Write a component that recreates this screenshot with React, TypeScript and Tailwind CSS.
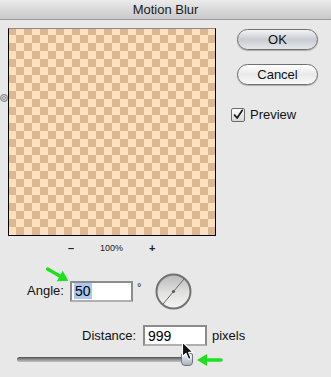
import React from "react";

const font = "font-['Lucida_Grande','Liberation_Sans',Arial,sans-serif]";

function AquaButton({ label, isDefault }: { label: string; isDefault?: boolean }) {
  return (
    <button
      className={`w-[81px] h-[21px] rounded-full border border-[#6f6f6f] text-[13px] leading-none text-[#111] shadow-[0_1px_1px_rgba(0,0,0,0.25)] ${
        isDefault
          ? "bg-linear-to-b from-[#f4f5f7] via-[#c9ccd1] to-[#e4e6ea]"
          : "bg-linear-to-b from-[#ffffff] via-[#e9e9e9] to-[#fafafa]"
      }`}
    >
      {label}
    </button>
  );
}

function GreenArrow({ className, rotate }: { className: string; rotate: number }) {
  return (
    <svg className={className} width="28" height="14" viewBox="0 0 28 14" style={{ transform: `rotate(${rotate}deg)` }}>
      <path d="M2 7 H18" stroke="#1fe01f" strokeWidth="3.5" strokeLinecap="round" />
      <path d="M16 1 L26 7 L16 13 Z" fill="#1fe01f" />
    </svg>
  );
}

export default function App() {
  return (
    <div className={`relative w-[331px] h-[377px] bg-[#e8e8e8] overflow-hidden ${font}`}>
      {/* title bar */}
      <div className="h-[20px] flex items-center justify-center bg-linear-to-b from-[#ebebeb] to-[#c8c8c8] border-b border-[#9c9c9c] text-[13px] text-[#1c1c1c]">
        Motion Blur
      </div>

      <div className="flex pt-[8px]">
        <div className="w-[8px] pt-[66px]">
          <svg width="8" height="8" viewBox="0 0 8 8">
            <circle cx="4" cy="4" r="3.3" fill="none" stroke="#8a8a8a" strokeWidth="1.2" />
            <circle cx="4" cy="4" r="1.5" fill="none" stroke="#8a8a8a" strokeWidth="1" />
          </svg>
        </div>
        <div className="w-[208px] h-[208px] border border-black border-t-[#8a8a8a] bg-[conic-gradient(#fedfbe_25%,#dcb892_0_50%,#fedfbe_0_75%,#dcb892_0)] bg-[length:16px_16px] bg-[position:-1px_-2px]" />
        <div className="ml-[21px] pt-[1px] flex flex-col">
          <AquaButton label="OK" isDefault />
          <div className="mt-[12px]">
            <AquaButton label="Cancel" />
          </div>
          <div className="mt-[19px] flex items-center gap-[5px] -ml-[6px]">
            <div className="w-[14px] h-[14px] rounded-[2px] border border-[#6b6b6b] bg-linear-to-b from-white to-[#d6d6d6] flex items-center justify-center">
              <svg width="14" height="14" viewBox="0 0 14 14">
                <path d="M3 7.2 L6 10.5 L12 1.5" fill="none" stroke="#1a1a1a" strokeWidth="2" strokeLinecap="round" strokeLinejoin="round" />
              </svg>
            </div>
            <span className="text-[13px] text-[#111]">Preview</span>
          </div>
        </div>
      </div>

      {/* zoom controls */}
      <div className="flex items-center h-[12px] mt-[6px] pl-[68px] text-[#222]">
        <span className="w-[8px] text-[11px] font-bold leading-none">–</span>
        <span className="ml-[24px] text-[9px] leading-none">100%</span>
        <span className="ml-[26px] text-[11px] font-bold leading-none">+</span>
      </div>

      {/* angle */}
      <div className="flex items-center h-[36px] mt-[19px] pl-[27px] text-[13px] text-[#111]">
        <span className="w-[40px]">Angle:</span>
        <div className="ml-[3px] w-[63px] h-[21px] border-2 border-[#8c8c8c] border-b-[#b0b0b0] bg-white flex items-center pl-[2px]">
          <span className="bg-[#a9c9f2] px-[1px] text-[14px] leading-[16px] text-black">50</span>
        </div>
        <span className="ml-[4px] -mt-[8px] text-[11px]">°</span>
        <svg className="ml-[14px]" width="37" height="37" viewBox="0 0 37 37">
          <defs>
            <linearGradient id="dial" x1="0" y1="0" x2="0" y2="1">
              <stop offset="0" stopColor="#b9b9b9" />
              <stop offset="0.55" stopColor="#e2e2e2" />
              <stop offset="1" stopColor="#f4f4f2" />
            </linearGradient>
          </defs>
          <circle cx="18.5" cy="18.5" r="17" fill="url(#dial)" stroke="#727272" strokeWidth="2" />
          <path d="M8 31 L29 6" stroke="#5a5a5a" strokeWidth="0.9" />
          <circle cx="18.5" cy="18.5" r="1.6" fill="#5a5a5a" />
        </svg>
      </div>

      {/* distance */}
      <div className="flex items-center h-[21px] mt-[16px] pl-[82px] text-[13px] text-[#111]">
        <span className="w-[58px]">Distance:</span>
        <div className="ml-[3px] w-[64px] h-[21px] border-2 border-[#8c8c8c] border-b-[#b0b0b0] bg-white flex items-center pl-[3px]">
          <span className="text-[14px] leading-none text-black">999</span>
        </div>
        <span className="ml-[5px]">pixels</span>
      </div>

      {/* slider */}
      <div className="flex items-center h-[14px] mt-[6px] pl-[17px]">
        <div className="w-[166px] h-[5px] rounded-full bg-linear-to-b from-[#6c6c6c] via-[#9a9a9a] to-[#c4c4c4] border-t border-[#5a5a5a]" />
        <div className="-ml-[2px] w-[12px] h-[13px] rounded-b-[4px] rounded-t-[2px] border border-[#6a7480] bg-linear-to-b from-[#eef2f6] to-[#aab4c0]" />
      </div>

      {/* annotations */}
      <GreenArrow className="absolute left-[44px] top-[268px]" rotate={30} />
      <GreenArrow className="absolute left-[195px] top-[353px]" rotate={180} />
      <svg className="absolute left-[181px] top-[341px]" width="14" height="20" viewBox="0 0 14 20">
        <path d="M1.5 1 L1.5 15.5 L5 12.3 L7.6 18.4 L10 17.3 L7.5 11.4 L12 11.4 Z" fill="#111" stroke="#fff" strokeWidth="1.1" strokeLinejoin="round" />
      </svg>
    </div>
  );
}
